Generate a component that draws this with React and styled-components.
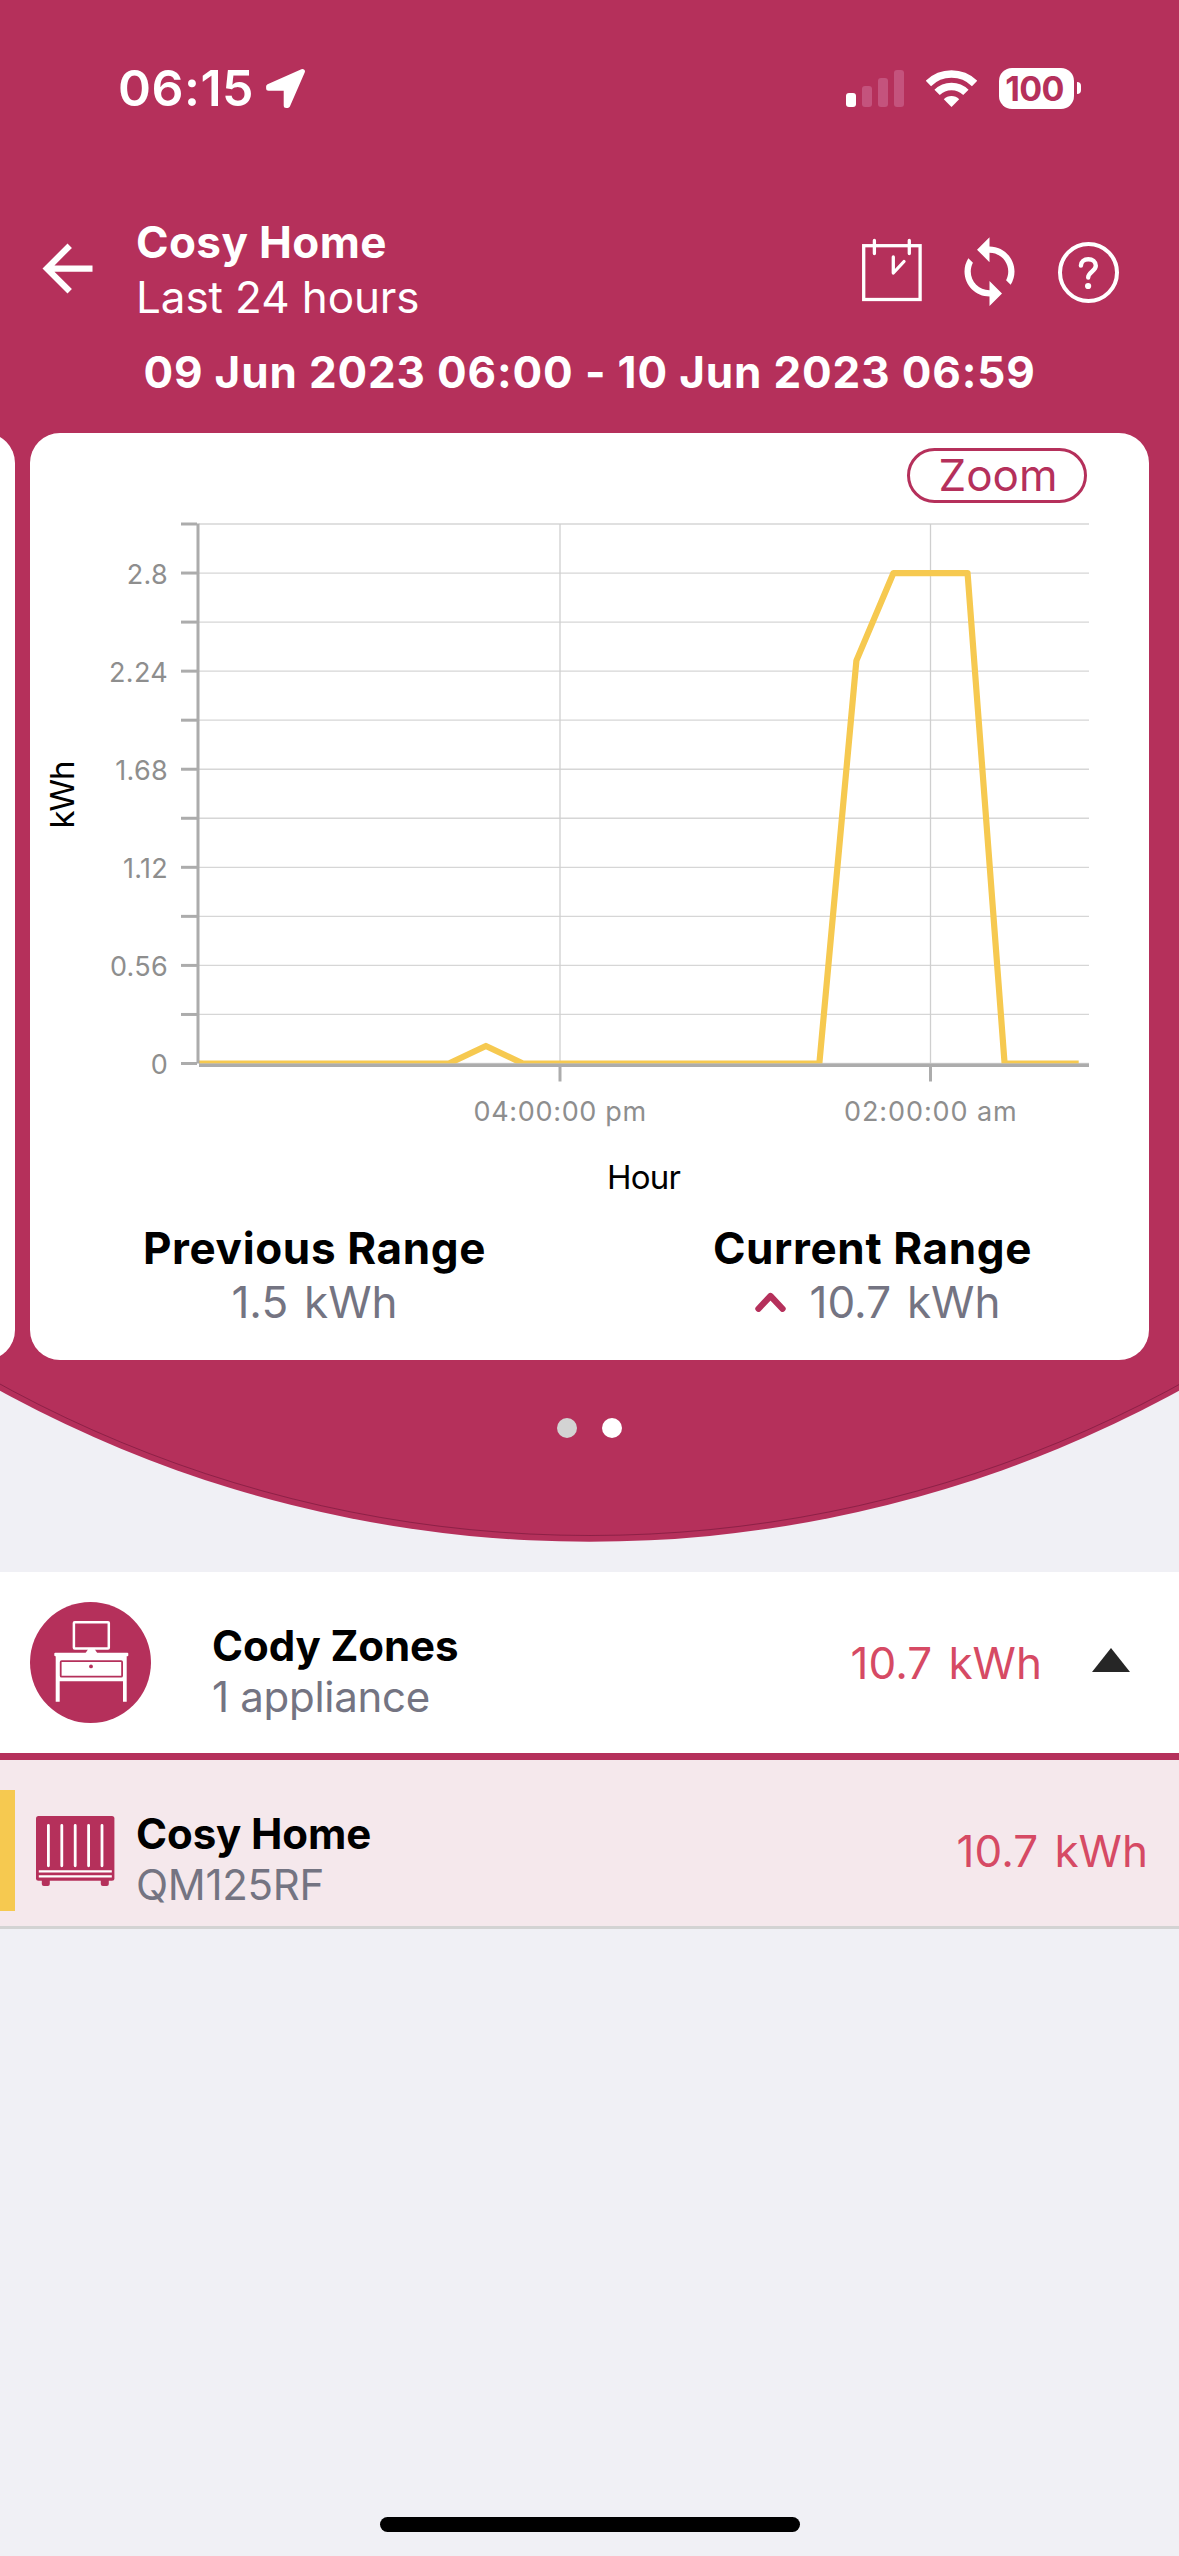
import React from "react";
import styled, { createGlobalStyle } from "styled-components";
import { MdArrowBack, MdSync } from "react-icons/md";

const PINK = "#b5305b";
const YELLOW = "#f6c950";

// plot area inside the chart svg
const PLOT = { left: 169, right: 1059, top: 14, bottom: 553.5 };
const GRID_ROWS = 11;
const HOUR_WIDTH = 37.05;
const FOUR_PM = 530;

const yLabels = ["0", "0.56", "1.12", "1.68", "2.24", "2.8"];

const xLabels = [
  { hour: 16, text: "04:00:00 pm" },
  { hour: 26, text: "02:00:00 am" },
];

const usage = [
  [6, 0],
  [13, 0],
  [14, 0.1],
  [15, 0],
  [23, 0],
  [24, 2.3],
  [25, 2.8],
  [27, 2.8],
  [28, 0],
  [30, 0],
];

const toX = (hour) => FOUR_PM + (hour - 16) * HOUR_WIDTH;
const rowHeight = (PLOT.bottom - PLOT.top) / GRID_ROWS;
const toY = (kwh) => PLOT.bottom - (kwh / 0.28) * rowHeight;

function StatusIcons() {
  return (
    <StatusRight>
      <Signal>
        <SignalBar $height={14} $active />
        <SignalBar $height={21} />
        <SignalBar $height={29} />
        <SignalBar $height={37} />
      </Signal>
      <svg width="51" height="37" viewBox="0 0 51 37" fill="none">
        <path d="M2.4 13.5A33 33 0 0 1 48.6 13.5" stroke="#fff" strokeWidth="7.6" />
        <path d="M11.1 22.4A20.5 20.5 0 0 1 39.9 22.4" stroke="#fff" strokeWidth="7.6" />
        <path d="M25.5 37L17.8 29.2A11 11 0 0 1 33.2 29.2Z" fill="#fff" />
      </svg>
      <BatteryWrap>
        <Battery>100</Battery>
        <BatteryTip />
      </BatteryWrap>
    </StatusRight>
  );
}

function CalendarIcon() {
  return (
    <svg width="60" height="64" viewBox="0 0 60 64" fill="none" stroke="#fff" strokeWidth="3.3">
      <rect x="1.7" y="7.7" width="56.4" height="53.8" />
      <path d="M12.4 2.5V15.5M47.3 2.5V15.5" strokeLinecap="round" />
      <path d="M31.3 19V35L42 23.5" strokeLinecap="round" strokeLinejoin="round" />
    </svg>
  );
}

function HelpIcon() {
  return (
    <svg width="61" height="61" viewBox="0 0 61 61" fill="none" stroke="#fff">
      <circle cx="30.5" cy="30.5" r="28.5" strokeWidth="4" />
      <path
        d="M22.9 23.6C23 19.6 26.2 17.2 30.3 17.2S37.8 19.8 37.8 23.8C37.8 29.2 30.2 29.8 30.2 35.6"
        strokeWidth="4.4"
        strokeLinecap="round"
      />
      <circle cx="30.1" cy="44" r="3.1" fill="#fff" stroke="none" />
    </svg>
  );
}

function DeskIcon() {
  return (
    <svg width="121" height="121" viewBox="0 0 121 121">
      <circle cx="60.5" cy="60.5" r="60.5" fill={PINK} />
      <rect x="43.9" y="20.2" width="34.9" height="26.3" rx="0.8" fill="none" stroke="#fff" strokeWidth="2.5" />
      <path d="M58.2 47H64.6L67.2 51H55.6Z" fill="#fff" />
      <rect x="24.3" y="50.7" width="74" height="3.6" rx="1" fill="#fff" />
      <path d="M25.7 53H96.7V99.7H93V79.3H29.7V99.7H25.7Z" fill="#fff" />
      <rect x="30.7" y="59.1" width="61.4" height="15.6" rx="1" fill="none" stroke={PINK} strokeWidth="1.8" />
      <circle cx="61" cy="64.4" r="1.9" fill={PINK} />
    </svg>
  );
}

function RadiatorIcon() {
  return (
    <svg width="79" height="70" viewBox="0 0 79 70">
      <rect width="78.4" height="64.7" rx="2.5" fill={PINK} />
      <rect x="5.8" y="62" width="8" height="8" rx="2" fill={PINK} />
      <rect x="64.8" y="62" width="8" height="8" rx="2" fill={PINK} />
      <path
        d="M12.4 9.5V49.8M25.8 9.5V49.8M39.2 9.5V49.8M52.6 9.5V49.8M66 9.5V49.8"
        stroke="#fff"
        strokeWidth="2.8"
        strokeLinecap="round"
      />
      <path d="M2.8 55.4H75.8M2.8 60.4H75.8" stroke="#fff" strokeWidth="2.4" />
    </svg>
  );
}

function UsageChart() {
  const rows = Array.from({ length: GRID_ROWS + 1 }, (_, i) => PLOT.bottom - i * rowHeight);
  const line = usage.map(([hour, kwh]) => `${toX(hour)},${toY(kwh)}`).join(" ");

  return (
    <ChartSvg width="1119" height="690" viewBox="0 0 1119 690">
      <clipPath id="plot">
        <rect x={PLOT.left} y="0" width={1049 - PLOT.left} height={PLOT.bottom} />
      </clipPath>

      {rows.map((y) => (
        <g key={y}>
          <line x1={PLOT.left} x2={PLOT.right} y1={y} y2={y} stroke="#d6d6d6" strokeWidth="1.3" />
          <line x1="151" x2="167" y1={y} y2={y} stroke="#acacac" strokeWidth="3" />
        </g>
      ))}

      {xLabels.map(({ hour, text }) => (
        <g key={hour}>
          <line x1={toX(hour)} x2={toX(hour)} y1={PLOT.top} y2={PLOT.bottom} stroke="#cfcfcf" strokeWidth="1.3" />
          <line x1={toX(hour)} x2={toX(hour)} y1="557" y2="571.5" stroke="#acacac" strokeWidth="3" />
          <TickText x={toX(hour)} y="611" textAnchor="middle" textLength="173">{text}</TickText>
        </g>
      ))}

      <polyline
        points={line}
        clipPath="url(#plot)"
        fill="none"
        stroke={YELLOW}
        strokeWidth="6.2"
        strokeLinejoin="round"
      />

      <line x1="168" x2="168" y1="13.5" y2="553.5" stroke="#acacac" strokeWidth="3" />
      <line x1="169" x2={PLOT.right} y1="555.3" y2="555.3" stroke="#acacac" strokeWidth="3.4" />

      {yLabels.map((text, i) => (
        <TickText key={text} x="138" y={rows[i * 2] + 10.5} textAnchor="end">{text}</TickText>
      ))}

      <AxisTitle x="614" y="679" textAnchor="middle" textLength="74">Hour</AxisTitle>
      <AxisTitle transform="translate(44 284.5) rotate(-90)" textAnchor="middle" textLength="68">kWh</AxisTitle>
    </ChartSvg>
  );
}

function App() {
  return (
    <Screen>
      <GlobalStyle />
      <Header>
        <StatusBar>
          <Clock>06:15</Clock>
          <svg width="39" height="39" viewBox="0 0 39 39">
            <path
              d="M36.4 2.6L2.6 17.6V19.2H20.2V36.4H21.6Z"
              fill="#fff"
              stroke="#fff"
              strokeWidth="5"
              strokeLinejoin="round"
            />
          </svg>
          <StatusIcons />
        </StatusBar>

        <NavBar>
          <BackButton aria-label="Back">
            <MdArrowBack size={75} />
          </BackButton>
          <NavTitle>
            <Title>Cosy Home</Title>
            <Subtitle>Last 24 hours</Subtitle>
          </NavTitle>
          <Actions>
            <CalendarIcon />
            <SyncWrap>
              <MdSync size={75} />
            </SyncWrap>
            <HelpWrap>
              <HelpIcon />
            </HelpWrap>
          </Actions>
        </NavBar>

        <DateRange>09 Jun 2023 06:00 - 10 Jun 2023 06:59</DateRange>

        <Carousel>
          <Card />
          <Card>
            <ZoomButton>Zoom</ZoomButton>
            <UsageChart />
            <Ranges>
              <Range>
                <RangeTitle>Previous Range</RangeTitle>
                <RangeValue>1.5 kWh</RangeValue>
              </Range>
              <Range>
                <RangeTitle>Current Range</RangeTitle>
                <RangeValue $trend>
                  <svg width="31" height="20" viewBox="0 0 31 20" fill="none">
                    <path d="M3.4 16.8L15.5 4L27.6 16.8" stroke={PINK} strokeWidth="6.2" strokeLinecap="round" strokeLinejoin="round" />
                  </svg>
                  10.7 kWh
                </RangeValue>
              </Range>
            </Ranges>
          </Card>
        </Carousel>

        <Dots>
          <Dot />
          <Dot $active />
        </Dots>
      </Header>

      <ZoneRow>
        <DeskIcon />
        <ZoneText>
          <RowTitle>Cody Zones</RowTitle>
          <RowSubtitle>1 appliance</RowSubtitle>
        </ZoneText>
        <RowValue>10.7 kWh</RowValue>
        <Triangle />
      </ZoneRow>

      <ApplianceRow>
        <ColourTag />
        <RadiatorIcon />
        <ApplianceText>
          <RowTitle>Cosy Home</RowTitle>
          <RowSubtitle>QM125RF</RowSubtitle>
        </ApplianceText>
        <RowValue>10.7 kWh</RowValue>
      </ApplianceRow>

      <HomeIndicator />
    </Screen>
  );
}

const GlobalStyle = createGlobalStyle`
  *,
  *::after {
    box-sizing: border-box;
  }

  body {
    margin: 0;
    background: #f0f0f5;
    font-family: Inter, "Liberation Sans", sans-serif;
  }

  svg {
    display: block;
    flex-shrink: 0;
  }
`;

const Screen = styled.div`
  display: flex;
  flex-direction: column;
  width: 1179px;
  height: 2556px;
  background: #f0f0f5;
  overflow: hidden;
`;

const Header = styled.header`
  position: relative;
  display: flex;
  flex-direction: column;
  flex-shrink: 0;
  height: 1542px;
  background: ${PINK};
  clip-path: circle(1226px at 589.5px 315.8px);

  /* thin seam that follows the curved edge */
  &::after {
    content: "";
    position: absolute;
    left: -636.5px;
    top: -916.5px;
    width: 2452px;
    height: 2452px;
    border: 1px solid rgba(110, 20, 55, 0.55);
    border-radius: 50%;
    pointer-events: none;
  }
`;

const StatusBar = styled.div`
  display: flex;
  align-items: center;
  height: 176px;
  padding: 0 98px 0 118px;
`;

const Clock = styled.span`
  width: 148px;
  color: #fff;
  font-size: 50px;
  font-weight: 600;
  line-height: 60px;
  letter-spacing: 0.5px;
`;

const StatusRight = styled.div`
  display: flex;
  align-items: center;
  margin-left: auto;
`;

const Signal = styled.div`
  display: flex;
  align-items: flex-end;
  gap: 6px;
  margin-right: 22px;
`;

const SignalBar = styled.span`
  width: 10px;
  height: ${({ $height }) => $height}px;
  border-radius: 3px;
  background: ${({ $active }) => ($active ? "#fff" : "#c4537d")};
`;

const BatteryWrap = styled.div`
  display: flex;
  align-items: center;
  gap: 3px;
  margin-left: 22px;
`;

const Battery = styled.span`
  width: 75px;
  height: 41px;
  padding-right: 4px;
  border-radius: 13px;
  background: #fff;
  color: ${PINK};
  text-align: center;
  font-size: 34px;
  font-weight: 700;
  line-height: 41px;
  letter-spacing: -0.6px;
`;

const BatteryTip = styled.span`
  width: 4px;
  height: 12px;
  border-radius: 0 4px 4px 0;
  background: #fff;
`;

const NavBar = styled.nav`
  display: flex;
  align-items: center;
  height: 109px;
  margin-top: 39px;
  padding: 0 60px 0 30px;
`;

const BackButton = styled.button`
  display: flex;
  width: 106px;
  padding: 0 0 3px;
  border: none;
  background: none;
  color: #fff;
`;

const NavTitle = styled.div`
  display: flex;
  flex-direction: column;
`;

const Title = styled.h1`
  margin: 0;
  color: #fff;
  font-size: 44px;
  font-weight: 700;
  line-height: 54.5px;
  letter-spacing: 0.4px;
`;

const Subtitle = styled.span`
  color: #fff;
  font-size: 44px;
  font-weight: 400;
  line-height: 54.5px;
  letter-spacing: -0.1px;
`;

const Actions = styled.div`
  display: flex;
  align-items: center;
  margin-left: auto;
  color: #fff;
`;

const SyncWrap = styled.div`
  margin: 3px 31px 0 30.5px;
`;

const HelpWrap = styled.div`
  padding-top: 6px;
`;

const DateRange = styled.p`
  margin: 21px 0 0;
  color: #fff;
  text-align: center;
  font-size: 44px;
  font-weight: 700;
  line-height: 54px;
  letter-spacing: 0.85px;
`;

const Carousel = styled.div`
  display: flex;
  gap: 15px;
  margin: 34px 0 0 -1104px;
`;

const Card = styled.section`
  display: flex;
  flex-direction: column;
  flex-shrink: 0;
  width: 1119px;
  height: 927px;
  border-radius: 30px;
  background: #fff;
`;

const ZoomButton = styled.button`
  align-self: flex-end;
  width: 180px;
  height: 55px;
  margin: 15px 62px 0 0;
  padding: 0 0 0 2px;
  border: 3px solid ${PINK};
  border-radius: 28px;
  background: #fff;
  color: ${PINK};
  font-family: inherit;
  font-size: 44px;
  line-height: 49px;
`;

const ChartSvg = styled.svg`
  margin-top: 7px;
`;

const TickText = styled.text`
  fill: #8e8e8e;
  font-size: 27px;
  letter-spacing: 0.3px;
`;

const AxisTitle = styled.text`
  fill: #000;
  font-size: 33px;
`;

const Ranges = styled.div`
  display: flex;
  gap: 5px;
  margin-top: 21px;
  padding-left: 8px;
`;

const Range = styled.div`
  display: flex;
  flex: 1;
  flex-direction: column;
  align-items: center;
`;

const RangeTitle = styled.h2`
  margin: 0;
  color: #000;
  font-size: 44px;
  font-weight: 700;
  line-height: 54px;
  letter-spacing: 0.65px;
`;

const RangeValue = styled.span`
  display: flex;
  align-items: center;
  gap: 24px;
  padding-left: ${({ $trend }) => ($trend ? "10px" : "0")};
  color: #747482;
  font-size: 44px;
  line-height: 54px;
  word-spacing: 3.5px;
`;

const Dots = styled.div`
  display: flex;
  justify-content: center;
  gap: 25px;
  margin-top: 58px;
`;

const Dot = styled.span`
  width: 20px;
  height: 20px;
  border-radius: 50%;
  background: ${({ $active }) => ($active ? "#fff" : "#d3d3d3")};
`;

const Row = styled.div`
  display: flex;
  align-items: center;
  flex-shrink: 0;
`;

const ZoneRow = styled(Row)`
  height: 188px;
  margin-top: 30px;
  padding: 0 49px 0 30px;
  border-bottom: 7px solid ${PINK};
  background: #fff;
`;

const ApplianceRow = styled(Row)`
  height: 169px;
  padding: 15px 31px 0 0;
  border-bottom: 3px solid #d3d3d3;
  background: #f5e8ec;
`;

const ColourTag = styled.span`
  width: 15px;
  height: 121px;
  margin-right: 21px;
  background: ${YELLOW};
`;

const RowText = styled.div`
  display: flex;
  flex-direction: column;
  padding-top: 16px;
`;

const ZoneText = styled(RowText)`
  margin-left: 61px;
`;

const ApplianceText = styled(RowText)`
  margin-left: 21px;
`;

const RowTitle = styled.span`
  color: #000;
  font-size: 42px;
  font-weight: 700;
  line-height: 52px;
  letter-spacing: -0.1px;
`;

const RowSubtitle = styled.span`
  color: #747482;
  font-size: 42px;
  line-height: 50px;
  letter-spacing: -0.3px;
`;

const RowValue = styled.span`
  margin-left: auto;
  color: #d64a64;
  font-size: 44px;
  line-height: 54px;
  word-spacing: 4px;
`;

const Triangle = styled.span`
  width: 0;
  height: 0;
  margin: 0 0 5px 50px;
  border-right: 19px solid transparent;
  border-bottom: 24px solid #262626;
  border-left: 19px solid transparent;
`;

const HomeIndicator = styled.div`
  align-self: center;
  width: 420px;
  height: 15px;
  margin-top: auto;
  margin-bottom: 24px;
  border-radius: 8px;
  background: #000;
`;

export default App;
